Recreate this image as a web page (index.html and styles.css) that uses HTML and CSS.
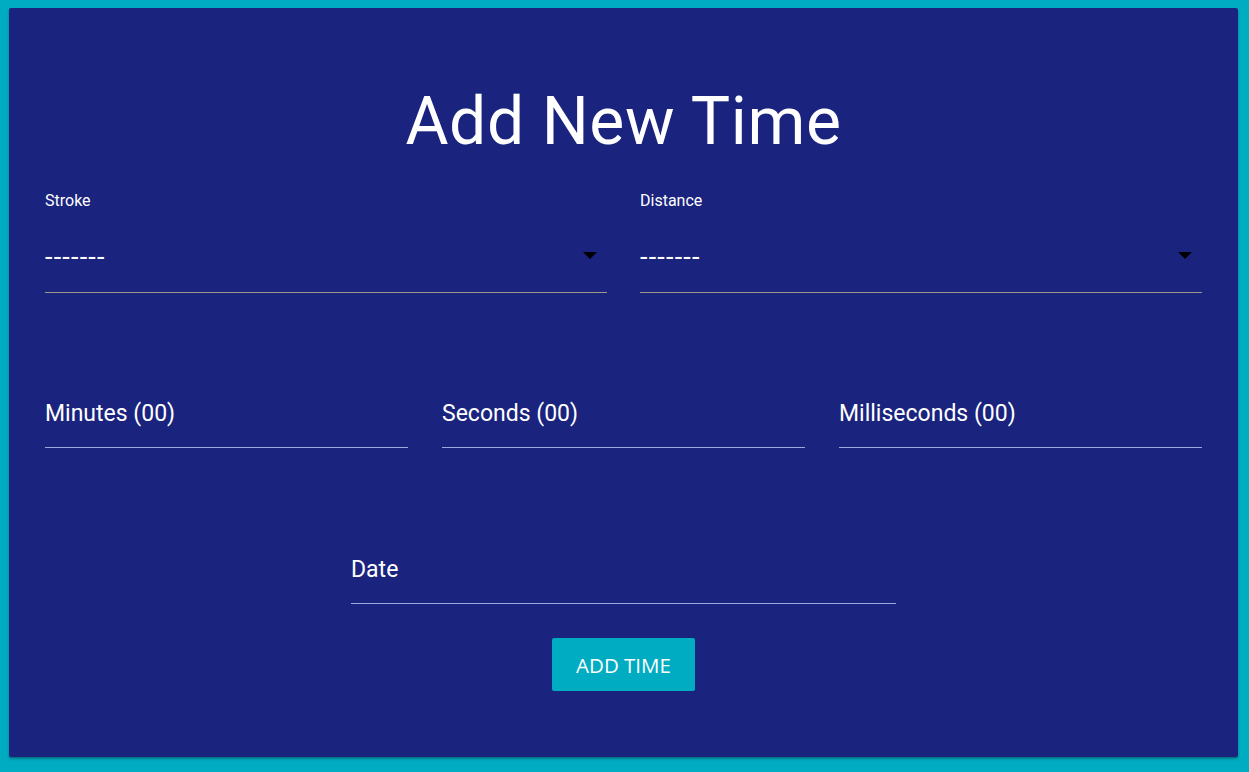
FILE: index.html
```html
<!DOCTYPE html>
<html>
<head>
<meta charset="utf-8">
<link rel="stylesheet" href="styles.css">
</head>
<body>
<div class="card">
  <h1 class="title">Add New Time</h1>
  <div class="row two">
    <div class="select-field">
      <label class="small-label">Stroke</label>
      <div class="select">
        <span class="value">-------</span>
        <span class="caret"></span>
      </div>
    </div>
    <div class="select-field">
      <label class="small-label">Distance</label>
      <div class="select">
        <span class="value">-------</span>
        <span class="caret"></span>
      </div>
    </div>
  </div>
  <div class="row three">
    <div class="input-field"><span class="placeholder">Minutes (00)</span></div>
    <div class="input-field"><span class="placeholder">Seconds (00)</span></div>
    <div class="input-field"><span class="placeholder">Milliseconds (00)</span></div>
  </div>
  <div class="row date-row">
    <div class="input-field date"><span class="placeholder">Date</span></div>
  </div>
  <div class="actions">
    <button class="btn">ADD TIME</button>
  </div>
</div>
</body>
</html>
```

FILE: styles.css
```css
html, body {
  margin: 0;
  padding: 0;
}
body {
  background: #00acc1;
  font-family: Roboto, "Liberation Sans", sans-serif;
  color: #ffffff;
  padding: 8px 11px 15px 9px;
  height: 772px;
  box-sizing: border-box;
}
.card {
  background: #1a237e;
  border-radius: 2px;
  box-shadow: 0 2px 3px rgba(0,0,0,0.25), 0 1px 1px rgba(0,0,0,0.15);
  height: 749px;
  box-sizing: border-box;
  padding: 0 36px;
}
.title {
  margin: 0;
  padding-top: 76px;
  font-weight: 400;
  font-size: 66px;
  line-height: 76px;
  text-align: center;
  letter-spacing: 0.6px;
}
.row {
  display: grid;
}
.row.two {
  grid-template-columns: 1fr 1fr;
  column-gap: 33px;
  margin-top: 31px;
}
.small-label {
  display: block;
  font-size: 16px;
  line-height: 20px;
}
.select {
  display: flex;
  align-items: center;
  justify-content: space-between;
  height: 54px;
  margin-top: 27px;
  border-bottom: 1px solid #9c9a86;
  padding-right: 10px;
}
.value {
  font-size: 27px;
  line-height: 30px;
  letter-spacing: 1.2px;
  margin-top: -16px;
}
.caret {
  width: 0;
  height: 0;
  border-left: 7px solid transparent;
  border-right: 7px solid transparent;
  border-top: 7px solid #000000;
  margin-top: -19px;
}
.row.three {
  grid-template-columns: 1fr 1fr 1fr;
  column-gap: 34px;
  margin-top: 98px;
}
.input-field {
  height: 57px;
  border-bottom: 1px solid #9fa8da;
  box-sizing: border-box;
  display: flex;
  align-items: center;
}
.placeholder {
  font-size: 23px;
  margin-top: -12px;
}
.date-row {
  justify-content: center;
  margin-top: 99px;
}
.input-field.date {
  width: 545px;
}
.actions {
  display: flex;
  justify-content: center;
  margin-top: 34px;
}
.btn {
  background: #00acc1;
  color: #ffffff;
  border: none;
  border-radius: 2px;
  width: 143px;
  height: 53px;
  font-family: "Open Sans", sans-serif;
  font-size: 20.5px;
  padding: 0;
}
```
